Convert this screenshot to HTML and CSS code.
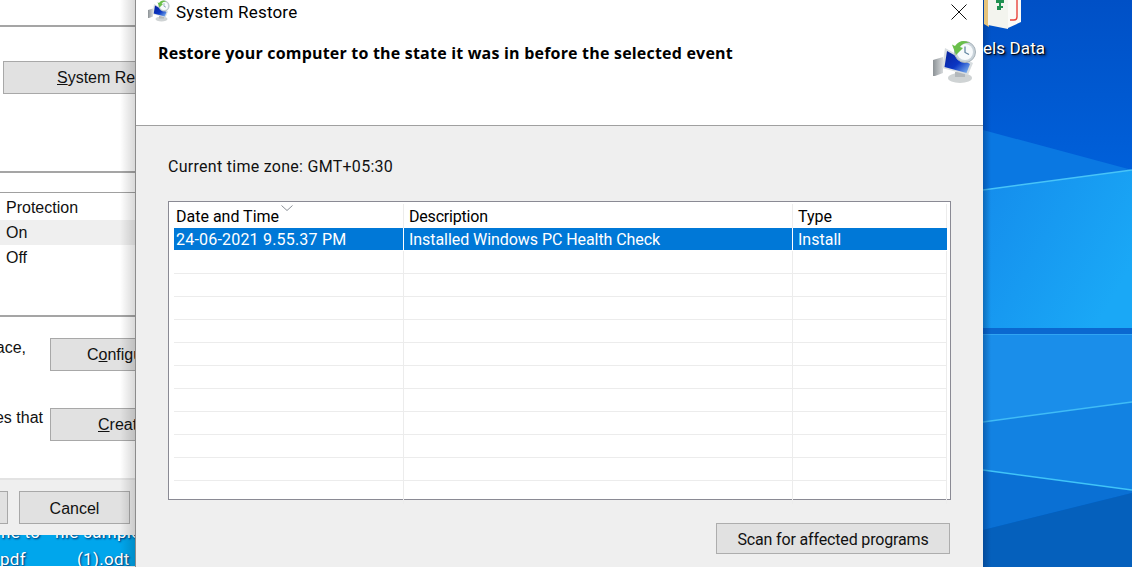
FILE: index.html
```html
<!DOCTYPE html>
<html lang="en">
  <head>
    <meta charset="UTF-8" />
    <meta name="viewport" content="width=device-width, initial-scale=1.0" />
    <title>System Restore</title>
    <link rel="stylesheet" href="styles.css">
  </head>
  <body>
    <div class="desktop">
      <svg class="wallpaper" viewBox="0 0 149 567" aria-hidden="true">
        <defs>
          <linearGradient id="wallTop" x1="0" y1="0" x2="0" y2="1">
            <stop offset="0" stop-color="#0050c6" />
            <stop offset="1" stop-color="#0062dc" />
          </linearGradient>
          <linearGradient id="wallMid" x1="0" y1="0" x2="1" y2="0.6">
            <stop offset="0" stop-color="#148cec" />
            <stop offset="1" stop-color="#1aa8f6" />
          </linearGradient>
          <linearGradient id="wallEdge" x1="0" y1="0" x2="1" y2="0">
            <stop offset="0" stop-color="#00235a" stop-opacity="0.35" />
            <stop offset="1" stop-color="#00235a" stop-opacity="0" />
          </linearGradient>
        </defs>
        <rect width="149" height="190" fill="url(#wallTop)" />
        <polygon points="0,130 149,170 0,190" fill="#0a78e2" />
        <polygon points="0,190 149,170 149,328 0,328" fill="url(#wallMid)" />
        <rect y="328" width="149" height="6" fill="#0a68d0" />
        <polygon points="0,334 149,334 149,402 0,422" fill="#1a8eea" />
        <polygon points="0,422 149,402 149,490 0,470" fill="#1282e2" />
        <polygon points="0,470 149,490 149,493 0,530" fill="#0a70d4" />
        <polygon points="0,530 149,493 149,567 0,567" fill="#0560bc" />
        <path d="M0 190L149 170" stroke="#48c4f8" stroke-width="1.5" />
        <path d="M0 334.5H149" stroke="#30a4f2" />
        <path d="M0 422L149 402" stroke="#40bcf6" stroke-width="1.5" />
        <path d="M0 470L149 490" stroke="#40c4f8" stroke-width="1.5" />
        <rect width="8" height="567" fill="url(#wallEdge)" />
      </svg>

      <!-- desktop icon behind the dialog -->
      <svg class="desk-icon" width="40" height="30" viewBox="0 0 40 30" aria-hidden="true">
        <path d="M1 0h5v27l-5-3z" fill="#e6c47c" />
        <path d="M5 0h20v29l-20-4z" fill="#f3f4ee" />
        <path d="M13 0h8v3h-3v3h2v2h-2v2h-4v-4h2v-3h-3z" fill="#1f8f50" />
        <path d="M25 0h13v22l-13 6z" fill="#fbfbf8" />
        <path d="M34 0v17q0 3-3 3h-4" fill="none" stroke="#e8443c" stroke-width="1.4" />
      </svg>
      <div class="desk-label">els Data</div>

      <!-- window behind, only its left edge shows -->
      <div class="back-window">
        <div class="back-top">
          <button class="back-btn back-btn-restore"><u>S</u>ystem Restore...</button>
        </div>
        <div class="back-table">
          <div class="back-row back-row-head">Protection</div>
          <div class="back-row back-row-on">On</div>
          <div class="back-row">Off</div>
        </div>
        <div class="back-config">
          <span class="back-note">ace,</span>
          <button class="back-btn back-btn-config">C<u>o</u>nfigure...</button>
        </div>
        <div class="back-create">
          <span class="back-note">es that</span>
          <button class="back-btn back-btn-create"><u>C</u>reate...</button>
        </div>
        <div class="back-footer">
          <button class="back-btn back-btn-ok"></button>
          <button class="back-btn back-btn-cancel">Cancel</button>
        </div>
        <div class="back-files">
          <div class="file-top"><span>ne to</span><span>file sample</span></div>
          <div class="file-bottom"><span>pdf</span><span>(1).odt</span></div>
        </div>
      </div>

      <!-- System Restore dialog -->
      <div class="dialog">
        <header class="dialog-head">
          <div class="title-bar">
            <svg class="restore-icon restore-icon-small" viewBox="0 0 44 44" aria-hidden="true">
              <use href="#restoreGlyph" />
            </svg>
            <span class="title-text">System Restore</span>
            <svg class="close-x" width="16" height="16" viewBox="0 0 16 16" aria-hidden="true">
              <path d="M.5.5l15 15M15.5.5l-15 15" stroke="#111" stroke-width="1" fill="none" />
            </svg>
          </div>
          <div class="head-row">
            <h1>Restore your computer to the state it was in before the selected event</h1>
            <svg class="restore-icon restore-icon-big" viewBox="0 0 44 44" aria-hidden="true">
              <defs>
                <linearGradient id="screenFill" x1="0" y1="0" x2="1" y2="1">
                  <stop offset="0" stop-color="#08209a" />
                  <stop offset="0.55" stop-color="#0a36c4" />
                  <stop offset="1" stop-color="#8cc0f2" />
                </linearGradient>
                <linearGradient id="towerFill" x1="0" y1="0" x2="1" y2="0">
                  <stop offset="0" stop-color="#8c9296" />
                  <stop offset="1" stop-color="#d6d9db" />
                </linearGradient>
                <symbol id="restoreGlyph" viewBox="0 0 44 44">
                  <path d="M0 20l10-3v16l-8 3h-2z" fill="url(#towerFill)" />
                  <ellipse cx="27" cy="38" rx="12" ry="5" fill="#cfd3d4" />
                  <path d="M22 32h10v5h-10z" fill="#b3b8bb" />
                  <path d="M12 8l28 15-5 12-26-7z" fill="#d8dde0" />
                  <path d="M14 11l23 13-3.500 9-22-6z" fill="url(#screenFill)" />
                  <circle cx="32" cy="12" r="10.500" fill="#c9d3da" stroke="#a7b2b9" />
                  <circle cx="32" cy="12" r="8" fill="#f7fafc" />
                  <path d="M32 6.500v6l4 2" stroke="#5a7f9c" stroke-width="1.200" fill="none" />
                  <path d="M37 3q-9-5-15 3l-3-1.500 4 10.500 7-7-3-1q4-5 10-4z" fill="#6abf4b" />
                </symbol>
              </defs>
              <use href="#restoreGlyph" />
            </svg>
          </div>
        </header>

        <div class="dialog-body">
          <p class="zone">Current time zone: GMT+05:30</p>

          <div class="event-table">
            <div class="event-row event-head">
              <div class="col-date">Date and Time<svg class="sort-arrow" width="12" height="6" viewBox="0 0 12 6" aria-hidden="true"><path d="M.5.5l5.500 5 5.500-5" stroke="#8a8f96" fill="none" /></svg></div>
              <div class="col-desc">Description</div>
              <div class="col-type">Type</div>
            </div>
            <div class="event-row event-selected">
              <div class="col-date">24-06-2021 9.55.37 PM</div>
              <div class="col-desc">Installed Windows PC Health Check</div>
              <div class="col-type">Install</div>
            </div>
            <div class="event-row event-empty"><div class="col-date"></div><div class="col-desc"></div><div class="col-type"></div></div>
            <div class="event-row event-empty"><div class="col-date"></div><div class="col-desc"></div><div class="col-type"></div></div>
            <div class="event-row event-empty"><div class="col-date"></div><div class="col-desc"></div><div class="col-type"></div></div>
            <div class="event-row event-empty"><div class="col-date"></div><div class="col-desc"></div><div class="col-type"></div></div>
            <div class="event-row event-empty"><div class="col-date"></div><div class="col-desc"></div><div class="col-type"></div></div>
            <div class="event-row event-empty"><div class="col-date"></div><div class="col-desc"></div><div class="col-type"></div></div>
            <div class="event-row event-empty"><div class="col-date"></div><div class="col-desc"></div><div class="col-type"></div></div>
            <div class="event-row event-empty"><div class="col-date"></div><div class="col-desc"></div><div class="col-type"></div></div>
            <div class="event-row event-empty"><div class="col-date"></div><div class="col-desc"></div><div class="col-type"></div></div>
            <div class="event-row event-empty"><div class="col-date"></div><div class="col-desc"></div><div class="col-type"></div></div>
            <div class="event-row event-empty event-last"><div class="col-date"></div><div class="col-desc"></div><div class="col-type"></div></div>
          </div>

          <div class="dialog-actions">
            <button class="scan-btn">Scan for affected programs</button>
          </div>
        </div>
      </div>
    </div>
  </body>
</html>
```

FILE: styles.css
```css
/* Reset some default styles */
body,
h1,
p,
button {
  margin: 0;
  padding: 0;
  box-sizing: border-box;
}

html,
body {
  height: 100%;
  overflow: hidden;
}

body {
  font-family: Roboto, "Open Sans", Arial, sans-serif;
  color: #000;
}

.desktop {
  position: relative;
  width: 1132px;
  height: 567px;
  overflow: hidden;
  background-color: #0068d4;
}

.wallpaper {
  position: absolute;
  left: 983px;
  top: 0;
  width: 149px;
  height: 567px;
}

/* desktop icon */
.desk-icon {
  position: absolute;
  left: 983px;
  top: 0;
}

.desk-label {
  position: absolute;
  left: 983px;
  top: 37px;
  font-size: 17px;
  letter-spacing: 0.1px;
  line-height: 22px;
  color: #fff;
  text-shadow: 1px 1px 1px #000, 2px 2px 3px #00205a;
}

/* back window */
.back-window {
  position: absolute;
  left: 0;
  top: 0;
  width: 136px;
  height: 567px;
  overflow: hidden;
  background-color: #fff;
  font-family: "Liberation Sans", Arial, sans-serif;
  font-size: 16px;
  color: #111;
}

.back-window::after {
  content: "";
  position: absolute;
  top: 0;
  right: 0;
  width: 16px;
  height: 567px;
  background: linear-gradient(to right, rgba(0, 0, 0, 0), rgba(0, 0, 0, 0.16));
}

.back-top {
  box-sizing: border-box;
  height: 148px;
  margin-top: 25px;
  padding: 34px 0 0 3px;
  border-top: 2px solid #a5a5a5;
  border-bottom: 2px solid #a5a5a5;
}

.back-btn {
  font-family: inherit;
  font-size: 16px;
  color: #111;
  background-color: #e1e1e1;
  border: 1px solid #a8a8a8;
  white-space: nowrap;
}

.back-btn-restore {
  width: 200px;
  height: 33px;
  text-align: left;
  padding-left: 53px;
}

.back-table {
  margin-top: 19px;
  height: 125px;
  box-sizing: border-box;
  border-top: 1px solid #a0a0a0;
  border-bottom: 2px solid #a5a5a5;
}

.back-row {
  height: 25px;
  line-height: 25px;
  padding-left: 6px;
}

.back-row-head {
  height: 27px;
  line-height: 29px;
}

.back-row-on {
  background-color: #efefef;
}

.back-config,
.back-create {
  display: flex;
  box-sizing: border-box;
  padding-top: 21px;
}

.back-config {
  height: 70px;
}

.back-create {
  height: 93px;
  border-bottom: 2px solid #e3e3e3;
}

.back-note {
  display: flex;
  justify-content: flex-end;
  width: 50px;
  height: 20px;
  flex-shrink: 0;
  box-sizing: border-box;
  line-height: 20px;
  white-space: nowrap;
}

.back-config .back-note {
  padding-right: 24px;
}

.back-create .back-note {
  padding-right: 7px;
}

.back-btn-config,
.back-btn-create {
  width: 200px;
  height: 33px;
  text-align: left;
  flex-shrink: 0;
}

.back-btn-config {
  padding-left: 36px;
}

.back-btn-create {
  padding-left: 47px;
}

.back-footer {
  display: flex;
  gap: 11px;
  height: 55px;
  padding-top: 11px;
  box-sizing: border-box;
  background-color: #efefef;
}

.back-btn-ok {
  width: 8px;
  height: 33px;
  border-left: none;
}

.back-btn-cancel {
  width: 111px;
  height: 33px;
  padding-top: 2px;
}

.back-files {
  height: 31px;
  background-color: #00a6ec;
  color: #fff;
  font-family: Roboto, "Open Sans", Arial, sans-serif;
  font-size: 17px;
  letter-spacing: 0.3px;
  text-shadow: 1px 1px 2px #00205a;
  overflow: hidden;
}

.file-top,
.file-bottom {
  display: flex;
  white-space: nowrap;
}

.file-top {
  gap: 14px;
  margin-top: -12px;
  margin-left: 1px;
  line-height: 18px;
}

.file-bottom {
  gap: 51px;
  margin-top: 7px;
  line-height: 22px;
}

/* dialog */
.dialog {
  position: absolute;
  left: 135px;
  top: 0;
  width: 848px;
  height: 567px;
  background-color: #efefef;
  border-left: 1px solid #8c8c8c;
  box-sizing: border-box;
}

.dialog-head {
  height: 126px;
  background-color: #fff;
  border-bottom: 1px solid #a0a0a0;
  box-sizing: border-box;
}

.title-bar {
  display: flex;
  align-items: center;
  height: 24px;
  padding-left: 12px;
  padding-right: 16px;
}

.restore-icon {
  display: block;
  flex-shrink: 0;
}

.restore-icon-small {
  width: 22px;
  height: 22px;
  margin-top: -2px;
}

.restore-icon-big {
  width: 44px;
  height: 44px;
}

.title-text {
  font-size: 17px;
  letter-spacing: 0.2px;
  margin-left: 6px;
  flex-grow: 1;
}

.head-row {
  display: flex;
  justify-content: space-between;
  align-items: flex-start;
  padding: 16px 6px 0 22px;
}

h1 {
  font-family: "Open Sans", Arial, sans-serif;
  font-size: 16px;
  font-weight: 700;
  letter-spacing: 0.2px;
  line-height: 27px;
}

.dialog-body {
  padding: 31px 32px 0 32px;
  font-size: 16px;
}

.zone {
  line-height: 20px;
  letter-spacing: 0.28px;
  margin-bottom: 24px;
  color: #111;
}

.event-table {
  height: 299px;
  width: 783px;
  background-color: #fff;
  border: 1px solid #8a8a94;
  box-sizing: border-box;
  padding: 2px 3px 0 5px;
}

.event-row {
  display: grid;
  grid-template-columns: 230px 389px 154px;
}

.event-row > div {
  box-sizing: border-box;
  border-right: 1px solid #ececec;
  padding-left: 5px;
  white-space: nowrap;
}

.event-row .col-date {
  padding-left: 2px;
}

.event-head {
  height: 24px;
}

.event-head > div {
  padding-top: 1px;
  line-height: 23px;
  position: relative;
}

.event-head .col-desc {
  letter-spacing: -0.2px;
}

.sort-arrow {
  position: absolute;
  left: 107px;
  top: 1px;
}

.event-selected {
  height: 22px;
  margin-bottom: 1px;
  background-color: #0078d7;
  color: #fff;
}

.event-selected > div {
  padding-top: 2px;
  line-height: 20px;
  border-right-color: #fff;
}

.event-selected .col-date {
  letter-spacing: 0.2px;
}

.event-selected .col-desc {
  letter-spacing: -0.06px;
}

.event-selected .col-type {
  border-right-color: transparent;
}

.event-empty {
  height: 23px;
  border-bottom: 1px solid #ececec;
  box-sizing: border-box;
}

.event-last {
  border-bottom: none;
}

.dialog-actions {
  display: flex;
  justify-content: flex-end;
  padding-top: 23px;
  padding-right: 1px;
}

.scan-btn {
  width: 234px;
  height: 31px;
  padding-top: 1px;
  font-family: inherit;
  font-size: 16px;
  letter-spacing: -0.15px;
  color: #111;
  background-color: #e1e1e1;
  border: 1px solid #adadad;
}
```
